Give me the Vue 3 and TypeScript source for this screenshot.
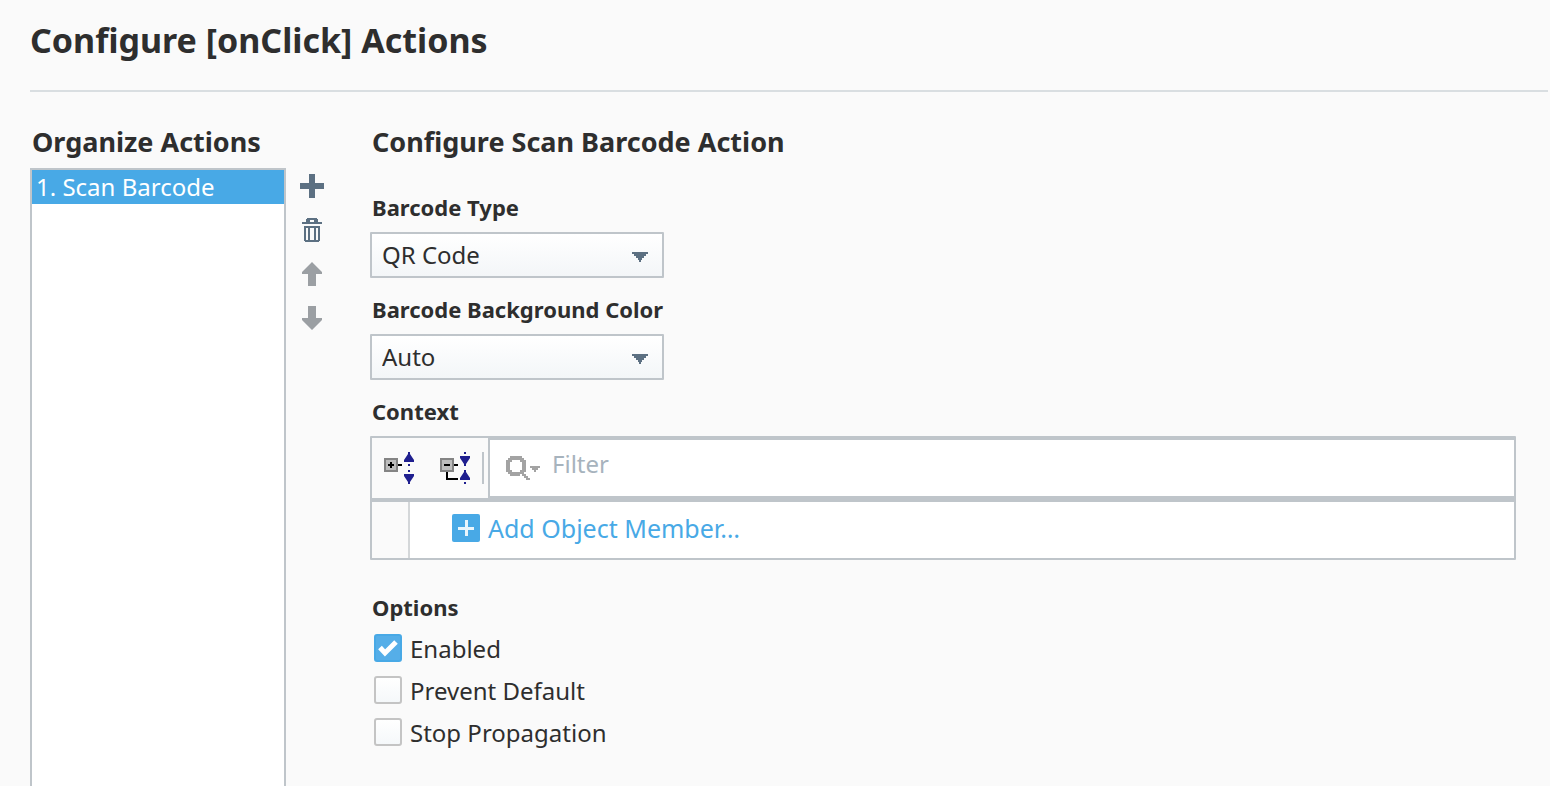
<script setup lang="ts">
import { ref } from 'vue'

const actions = ref<string[]>(['1. Scan Barcode'])
const selected = ref(0)
const barcodeType = ref('QR Code')
const background = ref('Auto')
const filter = ref('')
const options = ref([
  { label: 'Enabled', on: true },
  { label: 'Prevent Default', on: false },
  { label: 'Stop Propagation', on: false },
])
</script>

<template>
  <main class="page">
    <header class="head">
      <h1>Configure [onClick] Actions</h1>
    </header>
    <div class="body">
      <section class="organize">
        <h2>Organize Actions</h2>
        <div class="organize-row">
          <ul class="list">
            <li v-for="(a, i) in actions" :key="a">
              <button type="button" :class="['item', { active: i === selected }]" @click="selected = i">{{ a }}</button>
            </li>
          </ul>
          <div class="tools">
            <button type="button" class="tool" aria-label="Add action">
              <svg width="24" height="24" viewBox="0 0 24 24"><path d="M9 0h6v9h9v6h-9v9H9v-9H0V9h9z" /></svg>
            </button>
            <button type="button" class="tool" aria-label="Delete action">
              <svg width="24" height="24" viewBox="0 0 24 24" shape-rendering="crispEdges">
                <path fill-rule="evenodd" d="M7 0h10v1h1v3h4v2H2V4h4V1h1zM10 2v2h4V2z" />
                <path fill-rule="evenodd" d="M4 8h16v15h-1v1H5v-1H4zM6 10v12h2V10zM10 10v12h4V10zM16 10v12h2V10z" />
              </svg>
            </button>
            <button type="button" class="tool muted" aria-label="Move up">
              <svg width="24" height="24" viewBox="0 0 24 24"><path d="M12 0l10 10v2h-6v12H8V12H2v-2z" /></svg>
            </button>
            <button type="button" class="tool muted" aria-label="Move down">
              <svg width="24" height="24" viewBox="0 0 24 24"><path d="M12 24L2 14v-2h6V0h8v12h6v2z" /></svg>
            </button>
          </div>
        </div>
      </section>

      <section class="configure">
        <h2>Configure Scan Barcode Action</h2>
        <div class="field">
          <label class="label" for="type">Barcode Type</label>
          <div class="select">
            <select id="type" v-model="barcodeType"><option>QR Code</option></select>
            <svg class="caret" width="16" height="10" viewBox="0 0 16 10" shape-rendering="crispEdges"><path d="M0 0h16v2h-2v2h-2v2h-2v2H9v2H7V8H6V6H4V4H2V2H0z" /></svg>
          </div>
        </div>
        <div class="field">
          <label class="label" for="color">Barcode Background Color</label>
          <div class="select">
            <select id="color" v-model="background"><option>Auto</option></select>
            <svg class="caret" width="16" height="10" viewBox="0 0 16 10" shape-rendering="crispEdges"><path d="M0 0h16v2h-2v2h-2v2h-2v2H9v2H7V8H6V6H4V4H2V2H0z" /></svg>
          </div>
        </div>
        <div class="field">
          <label class="label" for="filter">Context</label>
          <div class="context">
            <div class="bar">
              <button type="button" class="tree" aria-label="Expand all">
                <svg width="32" height="32" viewBox="0 0 32 32">
                  <path fill="#848484" d="M0 6h14v14H0z" /><path fill="#bdbdbd" d="M2 8h10v10H2z" />
                  <path fill="#000" d="M6 10h2v2h2v2H8v2H6v-2H4v-2h2zM14 12h4v2h-4z" />
                  <path fill="#1f1f8f" d="M24 0h2v2l4 6v2H20V8l4-6zM24 12h2v2h-2zM24 18h2v2h-2zM20 22h10v2l-4 6v2h-2v-2l-4-6z" />
                </svg>
              </button>
              <button type="button" class="tree" aria-label="Collapse all">
                <svg width="32" height="32" viewBox="0 0 32 32">
                  <path fill="#848484" d="M0 6h14v14H0z" /><path fill="#bdbdbd" d="M2 8h10v10H2z" />
                  <path fill="#000" d="M4 12h6v2H4zM14 12h4v2h-4zM6 20h2v6h10v2H6z" />
                  <path fill="#1f1f8f" d="M24 0h2v2h-2zM20 4h10v2l-4 6v2h-2v-2l-4-6zM24 18h2v2l4 6v2H20v-2l4-6zM24 30h2v2h-2z" />
                </svg>
              </button>
              <span class="sep"></span>
              <div class="filter">
                <svg width="34" height="24" viewBox="0 0 34 24">
                  <path fill="#a3a3a3" shape-rendering="crispEdges" fill-rule="evenodd" d="M4 0h12v2h2v2h2v12h-2v2h2v2h2v2h2v2h-4v-2h-2v-2h-2v-2h-2v2H4v-2H2v-2H0V4h2V2h2zM6 4v2H4v8h2v2h8v-2h2V6h-2V4z" />
                  <path shape-rendering="crispEdges" d="M24 10h10v2h-2v2h-2v2h-2v-2h-2v-2h-2z" fill="#a3a3a3" />
                </svg>
                <input id="filter" v-model="filter" type="text" placeholder="Filter" />
              </div>
            </div>
            <div class="row">
              <span class="gutter"></span>
              <button type="button" class="add">
                <svg width="28" height="28" viewBox="0 0 28 28">
                  <rect width="28" height="28" rx="2" fill="#48a9e6" />
                  <path d="M13 6h3v7h6v3h-6v6h-3v-6H6v-3h7z" fill="#e9f5fc" />
                </svg>
                <span>Add Object Member…</span>
              </button>
            </div>
          </div>
        </div>
        <fieldset class="options">
          <legend class="label">Options</legend>
          <label v-for="o in options" :key="o.label" class="check">
            <span class="box">
              <input v-model="o.on" type="checkbox" />
              <svg v-if="o.on" class="tick" width="28" height="28" viewBox="0 0 28 28">
                <path d="M6 13.500l5 5.500L22 8" fill="none" stroke="#fff" stroke-width="5" />
              </svg>
            </span>
            <span class="check-text">{{ o.label }}</span>
          </label>
        </fieldset>
      </section>
    </div>
  </main>
</template>

<style>
html,
body {
  background: #fafafa;
}
body {
  margin: 0;
}
</style>

<style scoped>
.page {
  box-sizing: border-box;
  display: flex;
  flex-direction: column;
  min-height: 100vh;
  padding-left: 30px;
  color: #2e2e2e;
  font-family: "Noto Sans", "Open Sans", sans-serif;
  font-size: 24px;
  line-height: 34px;
}
h1,
h2,
ul {
  margin: 0;
  padding: 0;
}
button,
input,
select {
  margin: 0;
  padding: 0;
  border: 0;
  background: none;
  color: inherit;
  font: inherit;
}
.head {
  margin-right: 2px;
  padding: 20px 0 30px;
  border-bottom: 2px solid #d9dee1;
}
h1 {
  font-size: 34px;
  line-height: 40px;
}
h2 {
  padding-left: 2px;
  font-size: 27px;
  line-height: 28px;
  white-space: nowrap;
}
.body {
  flex: 1;
  display: flex;
  gap: 46px;
  padding-top: 36px;
}
.organize {
  display: flex;
  flex-direction: column;
  gap: 12px;
  width: 294px;
  flex: none;
}
.organize-row {
  flex: 1;
  display: flex;
  gap: 14px;
}
.list {
  flex: 1;
  list-style: none;
  background: #fff;
  border: 2px solid #bfc5ca;
  border-bottom: 0;
}
.item {
  display: block;
  width: 100%;
  padding-left: 4px;
  text-align: left;
}
.item.active {
  background: #48a9e6;
  color: #fff;
}
.tools {
  display: flex;
  flex-direction: column;
  gap: 20px;
  padding-top: 6px;
}
.tool {
  width: 24px;
  height: 24px;
  fill: #5c7082;
}
.tool.muted {
  fill: #9b9fa3;
}
svg {
  display: block;
}
.configure {
  flex: 1;
  min-width: 0;
  margin-right: 34px;
}
.configure h2 {
  margin-bottom: 36px;
}
.field {
  margin-bottom: 16px;
}
.label {
  display: block;
  margin-bottom: 10px;
  padding: 0 0 0 2px;
  font-size: 22px;
  font-weight: 700;
  line-height: 30px;
}
.select {
  position: relative;
  width: 294px;
}
.select select {
  display: block;
  box-sizing: border-box;
  width: 100%;
  height: 46px;
  padding: 0 40px 0 10px;
  appearance: none;
  border: 2px solid #bfc5ca;
  border-radius: 1px;
  background: linear-gradient(#fff, #f3f6f8);
}
.caret {
  position: absolute;
  top: 20px;
  right: 16px;
  fill: #5c7082;
  pointer-events: none;
}
.context {
  border: 2px solid #bfc5ca;
  border-radius: 1px;
}
.bar {
  display: flex;
  align-items: center;
  height: 60px;
  padding-left: 12px;
  border-bottom: 4px solid #bfc5ca;
}
.tree {
  width: 32px;
  margin-right: 24px;
}
.sep {
  width: 2px;
  height: 32px;
  margin: 0 4px 0 -14px;
  background: #bfc5ca;
}
.filter {
  flex: 1;
  align-self: stretch;
  display: flex;
  align-items: center;
  gap: 12px;
  padding-left: 16px;
  border: 2px solid #bfc5ca;
  border-right: 0;
  background: #fff;
}
.filter input {
  flex: 1;
  height: 40px;
  padding-bottom: 10px;
  outline: none;
}
.filter input::placeholder {
  color: #a7b3bd;
  opacity: 1;
}
.row {
  display: flex;
  height: 56px;
  background: #fff;
}
.gutter {
  width: 36px;
  border-right: 2px solid #d4d7d9;
  background: #fafafa;
}
.add {
  display: flex;
  align-items: center;
  gap: 8px;
  padding: 0 0 4px 42px;
  color: #48a9e6;
  font-size: 25px;
}
.options {
  margin: 32px 0 0;
  padding: 0;
  border: 0;
}
.options .label {
  margin-bottom: 12px;
}
.check {
  display: flex;
  align-items: center;
  gap: 8px;
  width: fit-content;
  height: 28px;
  margin: 0 0 14px 4px;
}
.check-text {
  padding-top: 2px;
}
.box {
  position: relative;
  width: 28px;
  height: 28px;
}
.box input {
  display: block;
  box-sizing: border-box;
  width: 28px;
  height: 28px;
  appearance: none;
  border: 2px solid #c4c4c4;
  border-radius: 3px;
  background: linear-gradient(#fff, #f5f8fa);
}
.box input:checked {
  border-color: #48a9e6;
  background: #55aee8;
}
.tick {
  position: absolute;
  inset: 0;
  pointer-events: none;
}
</style>
